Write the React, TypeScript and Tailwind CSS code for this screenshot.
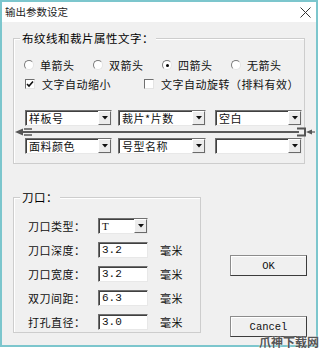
import React from 'react';

const Radio = ({ label, checked }: { label: string; checked?: boolean }) => (
  <div className="flex items-center w-[69px] h-[14px] shrink-0">
    <span className="w-[10px] h-[10px] rounded-full bg-white border border-[#7a7a7a] border-b-[#e4e4e4] border-r-[#e4e4e4] flex items-center justify-center shrink-0">
      {checked && <span className="w-[3px] h-[3px] rounded-full bg-black" />}
    </span>
    <span className="ml-[6px] whitespace-nowrap">{label}</span>
  </div>
);

const Check = ({ label, checked, w }: { label: string; checked?: boolean; w: string }) => (
  <div className={`flex items-center h-[14px] shrink-0 ${w}`}>
    <span className="w-[10px] h-[10px] bg-white border border-[#6f6f6f] border-b-[#e4e4e4] border-r-[#e4e4e4] flex items-center justify-center shrink-0">
      {checked && (
        <svg width="8" height="8" viewBox="0 0 8 8">
          <path d="M1 4 L3 6 L7 1.5" fill="none" stroke="#111" strokeWidth="1.6" />
        </svg>
      )}
    </span>
    <span className="ml-[7px] whitespace-nowrap">{label}</span>
  </div>
);

const DropBtn = () => (
  <span className="w-[13px] h-full bg-[#ececec] border border-t-white border-l-white border-b-[#6a6a6a] border-r-[#6a6a6a] flex items-center justify-center shrink-0">
    <svg width="6" height="4" viewBox="0 0 6 4">
      <path d="M0 0 H6 L3 3.5 Z" fill="#111" />
    </svg>
  </span>
);

const Combo = ({ value, w, mono }: { value: string; w: string; mono?: boolean }) => (
  <div className={`h-[16px] bg-white border border-[#707070] border-b-[#e8e8e8] border-r-[#e8e8e8] shadow-[inset_1px_1px_0_#404040] flex items-stretch pl-[3px] shrink-0 ${w}`}>
    <span className={`flex-1 flex items-center leading-[14px] whitespace-nowrap ${mono ? "font-['Liberation_Serif',serif] text-[11px]" : ''}`}>{value}</span>
    <DropBtn />
  </div>
);

const Field = ({ label, value, combo }: { label: string; value: string; combo?: boolean }) => (
  <div className="flex items-center h-[16px]">
    <span className="w-[70px] whitespace-nowrap">{label}</span>
    {combo ? (
      <Combo value={value} w="w-[50px]" mono />
    ) : (
      <div className="w-[50px] h-[16px] bg-white border border-[#707070] border-b-[#e8e8e8] border-r-[#e8e8e8] shadow-[inset_1px_1px_0_#404040] pl-[3px] flex items-center font-['Liberation_Mono',monospace] text-[11px] leading-[14px] tracking-[0px]">
        {value}
      </div>
    )}
    {!combo && <span className="ml-[12px] whitespace-nowrap">毫米</span>}
  </div>
);

const ArrowLine = () => (
  <svg width="300" height="12" viewBox="0 0 300 12" className="block">
    <line x1="8" y1="6" x2="284" y2="6" stroke="#5a5a5a" strokeWidth="2" />
    <path d="M0 6 L8 2.5 L8 9.5 Z" fill="#555" />
    <path d="M9 3 H17 M9 9 H17" stroke="#555" strokeWidth="1.5" />
    <path d="M282 2.5 H290 V9.5 H282" fill="none" stroke="#555" strokeWidth="2" />
    <path d="M291 6 L297 3.5 L297 8.5 Z" fill="#555" />
    <line x1="296" y1="6" x2="300" y2="6" stroke="#555" strokeWidth="1.2" />
  </svg>
);

export default function App() {
  return (
    <div className="w-[320px] h-[349px] bg-white relative font-['Noto_Sans_CJK_SC',sans-serif] text-[11px] tracking-[0.5px] text-[#111]">
      <div className="w-[318px] h-[347px] border-2 border-[#7cc6cd] flex flex-col">
        <div className="h-[20px] bg-white flex items-center justify-between pl-[3px] pr-[5px]">
          <span className="text-[10.5px] tracking-[0px] text-[#222]">输出参数设定</span>
          <svg width="11" height="11" viewBox="0 0 11 11">
            <path d="M0.5 0.5 L10.5 10.5 M10.5 0.5 L0.5 10.5" stroke="#333" strokeWidth="1" />
          </svg>
        </div>
        <div className="flex-1 bg-[#f0f0f0] flex flex-col">
          <div className="relative ml-[11px] mt-[16px] w-[292px] h-[126px] border border-[#cdcdcd] shadow-[inset_1px_1px_0_#fff] pt-[19px] pl-[10px]">
            <span className="absolute -top-[9px] left-[6px] bg-[#f0f0f0] px-[2px] leading-[16px] text-[11.5px] text-[#000]">布纹线和裁片属性文字：</span>
            <div className="flex">
              <Radio label="单箭头" />
              <Radio label="双箭头" />
              <Radio label="四箭头" checked />
              <Radio label="无箭头" />
            </div>
            <div className="flex mt-[5px] pl-[1px]">
              <Check label="文字自动缩小" checked w="w-[119px]" />
              <Check label="文字自动旋转（排料有效）" w="w-[160px]" />
            </div>
            <div className="flex mt-[19px] pl-[1px]">
              <Combo value="样板号" w="w-[87px]" />
              <Combo value="裁片*片数" w="w-[88px] ml-[6px]" />
              <Combo value="空白" w="w-[87px] ml-[9px]" />
            </div>
            <div className="h-[12px] -ml-[9px]">
              <ArrowLine />
            </div>
            <div className="flex pl-[1px]">
              <Combo value="面料颜色" w="w-[87px]" />
              <Combo value="号型名称" w="w-[88px] ml-[6px]" />
              <Combo value="" w="w-[87px] ml-[9px]" />
            </div>
          </div>
          <div className="flex mt-[33px]">
            <div className="relative ml-[11px] w-[188px] h-[136px] border border-[#cdcdcd] shadow-[inset_1px_1px_0_#fff] pt-[20px] pl-[14px] flex flex-col gap-[8px]">
              <span className="absolute -top-[9px] left-[6px] bg-[#f0f0f0] px-[2px] leading-[16px] text-[11.5px] text-[#000]">刀口：</span>
              <Field label="刀口类型：" value="T" combo />
              <Field label="刀口深度：" value="3.2" />
              <Field label="刀口宽度：" value="3.2" />
              <Field label="双刀间距：" value="6.3" />
              <Field label="打孔直径：" value="3.0" />
            </div>
            <div className="ml-[29px] pt-[58px] flex flex-col gap-[40px]">
              <button className="w-[77px] h-[21px] bg-[#f0f0f0] border border-[#8c8c8c] border-b-[#3c3c3c] border-r-[#3c3c3c] shadow-[inset_1px_1px_0_#fff] font-['Liberation_Mono',monospace] text-[10.5px] tracking-[0px] leading-[18px]">
                OK
              </button>
              <button className="w-[77px] h-[21px] bg-[#f0f0f0] border border-[#8c8c8c] border-b-[#3c3c3c] border-r-[#3c3c3c] shadow-[inset_1px_1px_0_#fff] font-['Liberation_Mono',monospace] text-[10.5px] tracking-[0px] leading-[18px]">
                Cancel
              </button>
            </div>
          </div>
        </div>
      </div>
      <span className="absolute right-[1px] bottom-0 text-[12px] font-bold tracking-[0px] leading-[15px] text-[#555] [text-shadow:0_0_2px_#fff]">爪神下载网</span>
    </div>
  );
}
